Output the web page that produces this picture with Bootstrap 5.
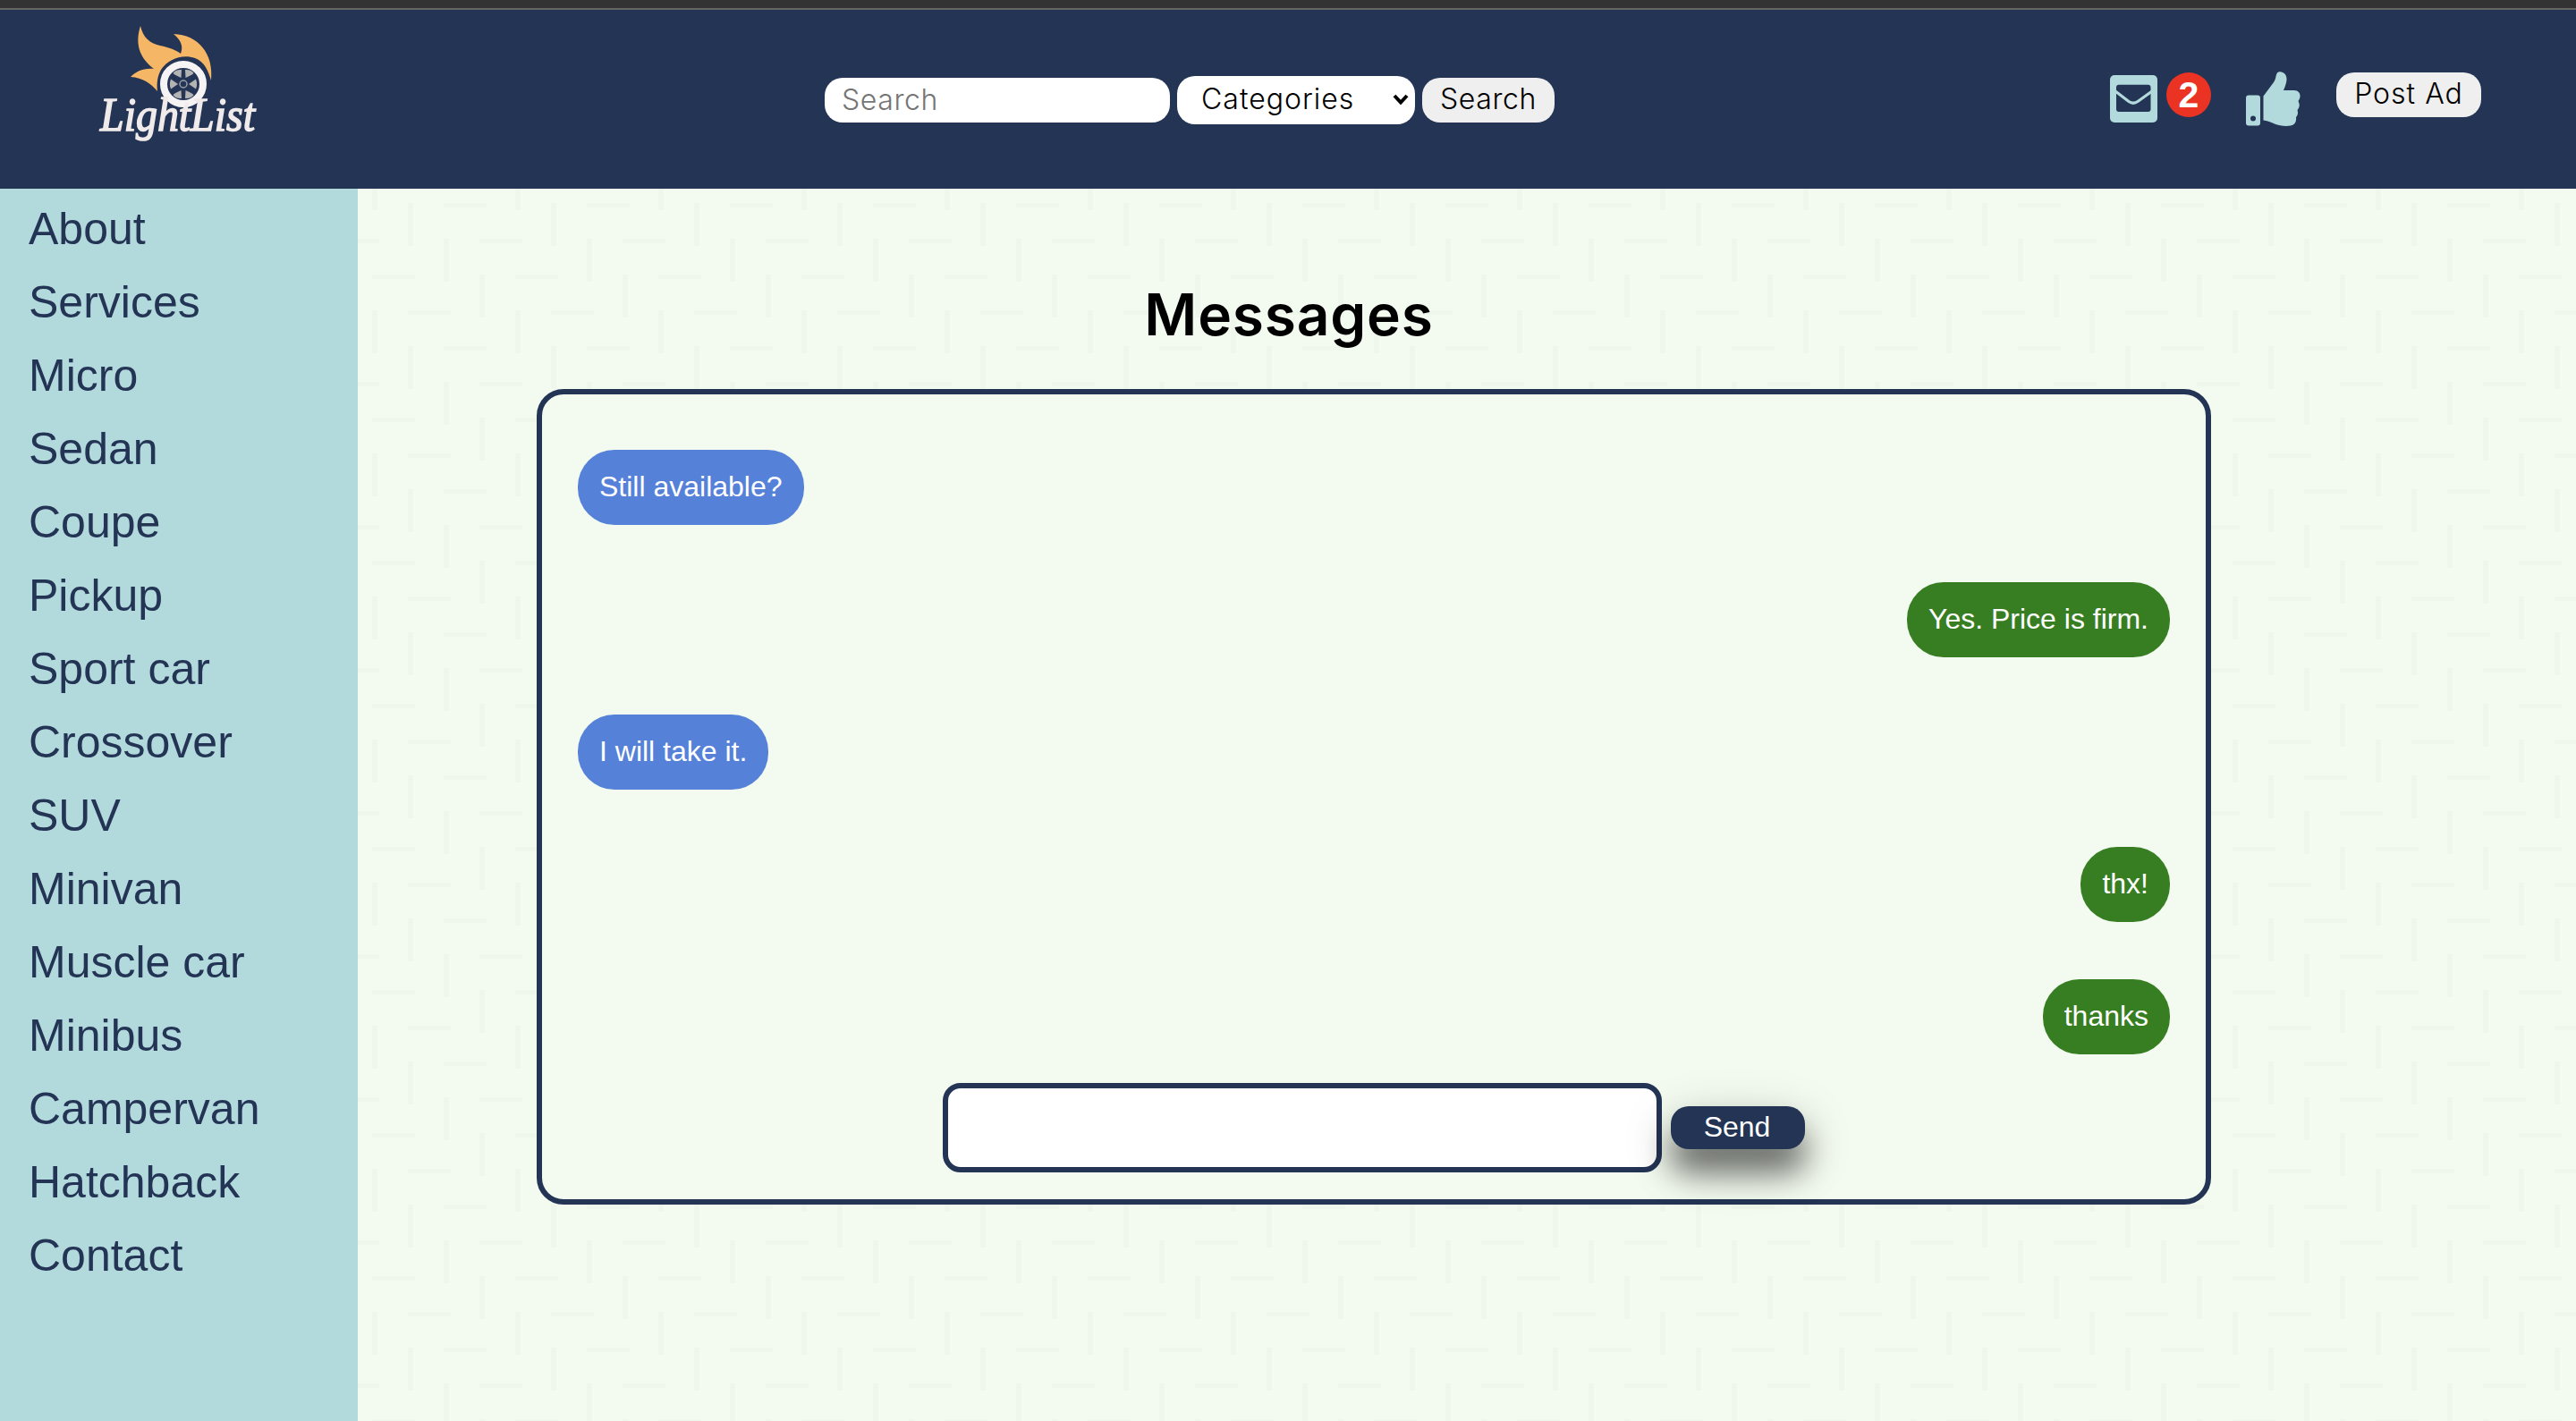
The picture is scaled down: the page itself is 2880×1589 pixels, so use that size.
<!DOCTYPE html>
<html lang="en">
<head>
<meta charset="utf-8">
<title>LightList - Messages</title>
<meta name="viewport" content="width=device-width, initial-scale=1">
<link href="https://cdn.jsdelivr.net/npm/bootstrap@5.3.0/dist/css/bootstrap.min.css" rel="stylesheet">
<style>
  :root { --navy:#243455; --aqua:#b2dadc; --mint:#f3faf0; }
  body { font-family:"Liberation Sans",Arial,sans-serif; background:var(--mint); color:#000; }
  .chrome-strip { height:11px; background:#333; border-bottom:2px solid #666; }
  .site-head { height:200px; background:var(--navy); padding:0 86px; }
  .brand-art { width:228px; height:170px; margin-top:14px; overflow:visible; }
  .brand-word { font-family:"Liberation Serif",serif; font-style:italic; font-size:52px; fill:#f0ebea; stroke:#f0ebea; stroke-width:1.6px; }
  .soft-font { font-family:Inter,sans-serif; font-weight:300; font-size:32px; line-height:1; color:#000; letter-spacing:.6px; }
  .find-box { width:386px; height:50px; border:0; border-radius:20px; padding:0 20px 2px 19px; background:#fff; }
  .find-box::placeholder { color:#757575; opacity:1; }
  .cat-wrap { width:266px; height:54px; border-radius:20px; background:#fff; padding:0 7px 2px 27px; letter-spacing:1px; }
  .pill-btn { height:50px; border:0; border-radius:20px; background:#efefef; padding:0 0 2px; }
  .find-btn { width:148px; }
  .post-btn { width:162px; margin-left:40px; letter-spacing:1px; }
  .search-form { gap:8px; margin-left:608px; margin-top:2px; }
  .tools { margin-left:auto; margin-right:20px; margin-top:70px; }
  .mail-icon { margin-top:3px; }
  .thumb-icon { margin-left:39px; margin-top:-1px; }
  .count-dot { width:50px; height:50px; background:#ea3323; font-size:41px; font-weight:700; line-height:50px; margin-left:10px; }
  .side { width:400px; background:var(--aqua); padding:4px 32px; }
  .side .nav-link { color:var(--navy); font-size:50px; line-height:82px; padding:0; }
  .page-body { height:1378px; }
  .content-area { min-width:0; padding:0 408px 0 200px;
    background:url("data:image/svg+xml,%3Csvg xmlns='http://www.w3.org/2000/svg' width='160' height='160'%3E%3Cpath fill='%23eff6ec' d='M0 0h6v48h-6zM40 40h6v48h-6zM80 80h6v48h-6zM120 120h6v40h-6zM120 0h6v8h-6zM0 120h48v5h-48zM80 40h48v5h-48zM120 80h40v5h-40zM0 80h8v5h-8zM40 0h48v5h-48z'/%3E%3C/svg%3E") 16px -24px; }
  .page-title { font-family:Inter,sans-serif; font-weight:600; font-size:64px; letter-spacing:.8px; line-height:80px; margin:101px 190px 0 0; padding-bottom:43px; color:#000; }
  .chat-panel { width:1872px; height:912px; border:6px solid var(--navy); border-radius:30px; background:#f3faef; padding:62px 40px 0; }
  .bubble { height:84px; line-height:82px; border-radius:41px; padding:0 24px; color:#fff; font-size:32px; margin-bottom:64px; }
  .bubble.theirs { background:#5681d8; }
  .bubble.mine { background:#377e22; }
  .compose { gap:10px; margin-top:-32px; }
  .compose input { width:804px; height:100px; border:6px solid var(--navy); border-radius:20px; background:#fff; padding:0 20px; font-size:32px; }
  .send-btn { width:150px; height:48px; border:0; border-radius:20px; background:var(--navy); color:#fff; font-size:32px; line-height:46px; padding:0 2px 2px 0; box-shadow:0 26px 34px rgba(0,0,0,.5), 0 16px 60px rgba(0,0,0,.2); }
</style>
<script src="https://cdn.jsdelivr.net/npm/bootstrap@5.3.0/dist/js/bootstrap.bundle.min.js"></script>
</head>
<body>
<div class="chrome-strip"></div>
<header class="site-head d-flex align-items-start">
  <svg class="brand-art flex-shrink-0" viewBox="86 25 228 170" role="img" aria-label="LightList">
    <path fill="#f5b765" d="M157 29C160 42 167 48 179 51C189 53 197 56 202 60C205 53 203 45 194 38C222 39 239 60 236 90C233 80 229 69 218 65C204 60 188 66 180 78C176 85 175 93 176 102C168 93 160 87 146 86C152 80 160 76 172 77C155 64 151 48 157 29Z"/>
    <circle cx="205" cy="94" r="22" fill="none" stroke="#f6f3f5" stroke-width="8"/>
    <g fill="#b3b3b3">
      <path d="M202.500 87C199 85 195 84 193.500 82C195 79 199 77.500 203 78Z"/>
      <path d="M207.500 87C211 85 215 84 216.500 82C215 79 211 77.500 207 78Z"/>
      <path d="M202.500 101C199 103 195 104 193.500 106C195 109 199 110.500 203 110Z"/>
      <path d="M207.500 101C211 103 215 104 216.500 106C215 109 211 110.500 207 110Z"/>
      <path d="M199 94L191 88.500C189.500 92 189.500 96 191 99.500Z"/>
      <path d="M211 94L219 88.500C220.500 92 220.500 96 219 99.500Z"/>
    </g>
    <circle cx="205" cy="94" r="4" fill="none" stroke="#9a9fa6" stroke-width="1.500"/>
    <text class="brand-word" x="112" y="146" textLength="173" lengthAdjust="spacingAndGlyphs">LightList</text>
  </svg>
  <form class="search-form d-flex align-items-center align-self-center" onsubmit="return false">
    <input class="find-box soft-font" type="text" placeholder="Search" aria-label="Search">
    <div class="cat-wrap soft-font d-flex align-items-center justify-content-between" role="button">
      <span>Categories</span>
      <svg width="18" height="12" viewBox="0 0 18 12"><path d="M2 2L9 9.500L16 2" fill="none" stroke="#000" stroke-width="4"/></svg>
    </div>
    <button class="pill-btn find-btn soft-font">Search</button>
  </form>
  <div class="tools d-flex align-items-start">
    <svg class="mail-icon" width="53" height="53" viewBox="0 0 53 53">
      <rect width="53" height="53" rx="5" fill="#b2dadc"/>
      <rect x="7" y="10.700" width="38.500" height="30.300" rx="3" fill="#243455"/>
      <path d="M6 18L21 29.500Q26 33 31 29.500L47 18" fill="none" stroke="#b2dadc" stroke-width="3.200"/>
    </svg>
    <span class="count-dot rounded-circle text-white text-center">2</span>
    <svg class="thumb-icon" width="61" height="61" viewBox="0 0 61 61" fill="#b2dadc">
      <path fill-rule="evenodd" d="M3 26.500H13Q16 26.500 16 29.500V57.500Q16 60.500 13 60.500H3Q0 60.500 0 57.500V29.500Q0 26.500 3 26.500ZM8 49.500A3 3 0 1 0 8 55.500A3 3 0 1 0 8 49.500Z"/>
      <path d="M19.500 27.500L31 12C34 8 33 4 35 1.500C37-.5 42 0 44.500 4C46.500 8 45.500 13 42 21H54C59 21 61 25 60.500 28C60 31 59 32 58.500 33C60.500 37 60 40 57.500 43C58.500 46 58 49 56 51C56.500 56 55 59.500 50 60.500C44 61.500 37 60.500 32 58.500C27 56.500 24 55 19.500 54.500Z"/>
    </svg>
    <button class="pill-btn post-btn soft-font">Post Ad</button>
  </div>
</header>
<div class="page-body d-flex">
  <nav class="side nav flex-column flex-nowrap flex-shrink-0">
    <a class="nav-link">About</a>
    <a class="nav-link">Services</a>
    <a class="nav-link">Micro</a>
    <a class="nav-link">Sedan</a>
    <a class="nav-link">Coupe</a>
    <a class="nav-link">Pickup</a>
    <a class="nav-link">Sport car</a>
    <a class="nav-link">Crossover</a>
    <a class="nav-link">SUV</a>
    <a class="nav-link">Minivan</a>
    <a class="nav-link">Muscle car</a>
    <a class="nav-link">Minibus</a>
    <a class="nav-link">Campervan</a>
    <a class="nav-link">Hatchback</a>
    <a class="nav-link">Contact</a>
  </nav>
  <main class="content-area flex-grow-1">
    <h1 class="page-title text-center">Messages</h1>
    <section class="chat-panel d-flex flex-column">
      <div class="bubble theirs align-self-start">Still available?</div>
      <div class="bubble mine align-self-end">Yes. Price is firm.</div>
      <div class="bubble theirs align-self-start">I will take it.</div>
      <div class="bubble mine align-self-end">thx!</div>
      <div class="bubble mine align-self-end">thanks</div>
      <form class="compose d-flex justify-content-center align-items-center" onsubmit="return false">
        <input type="text" aria-label="Message">
        <button class="send-btn">Send</button>
      </form>
    </section>
  </main>
</div>
</body>
</html>
